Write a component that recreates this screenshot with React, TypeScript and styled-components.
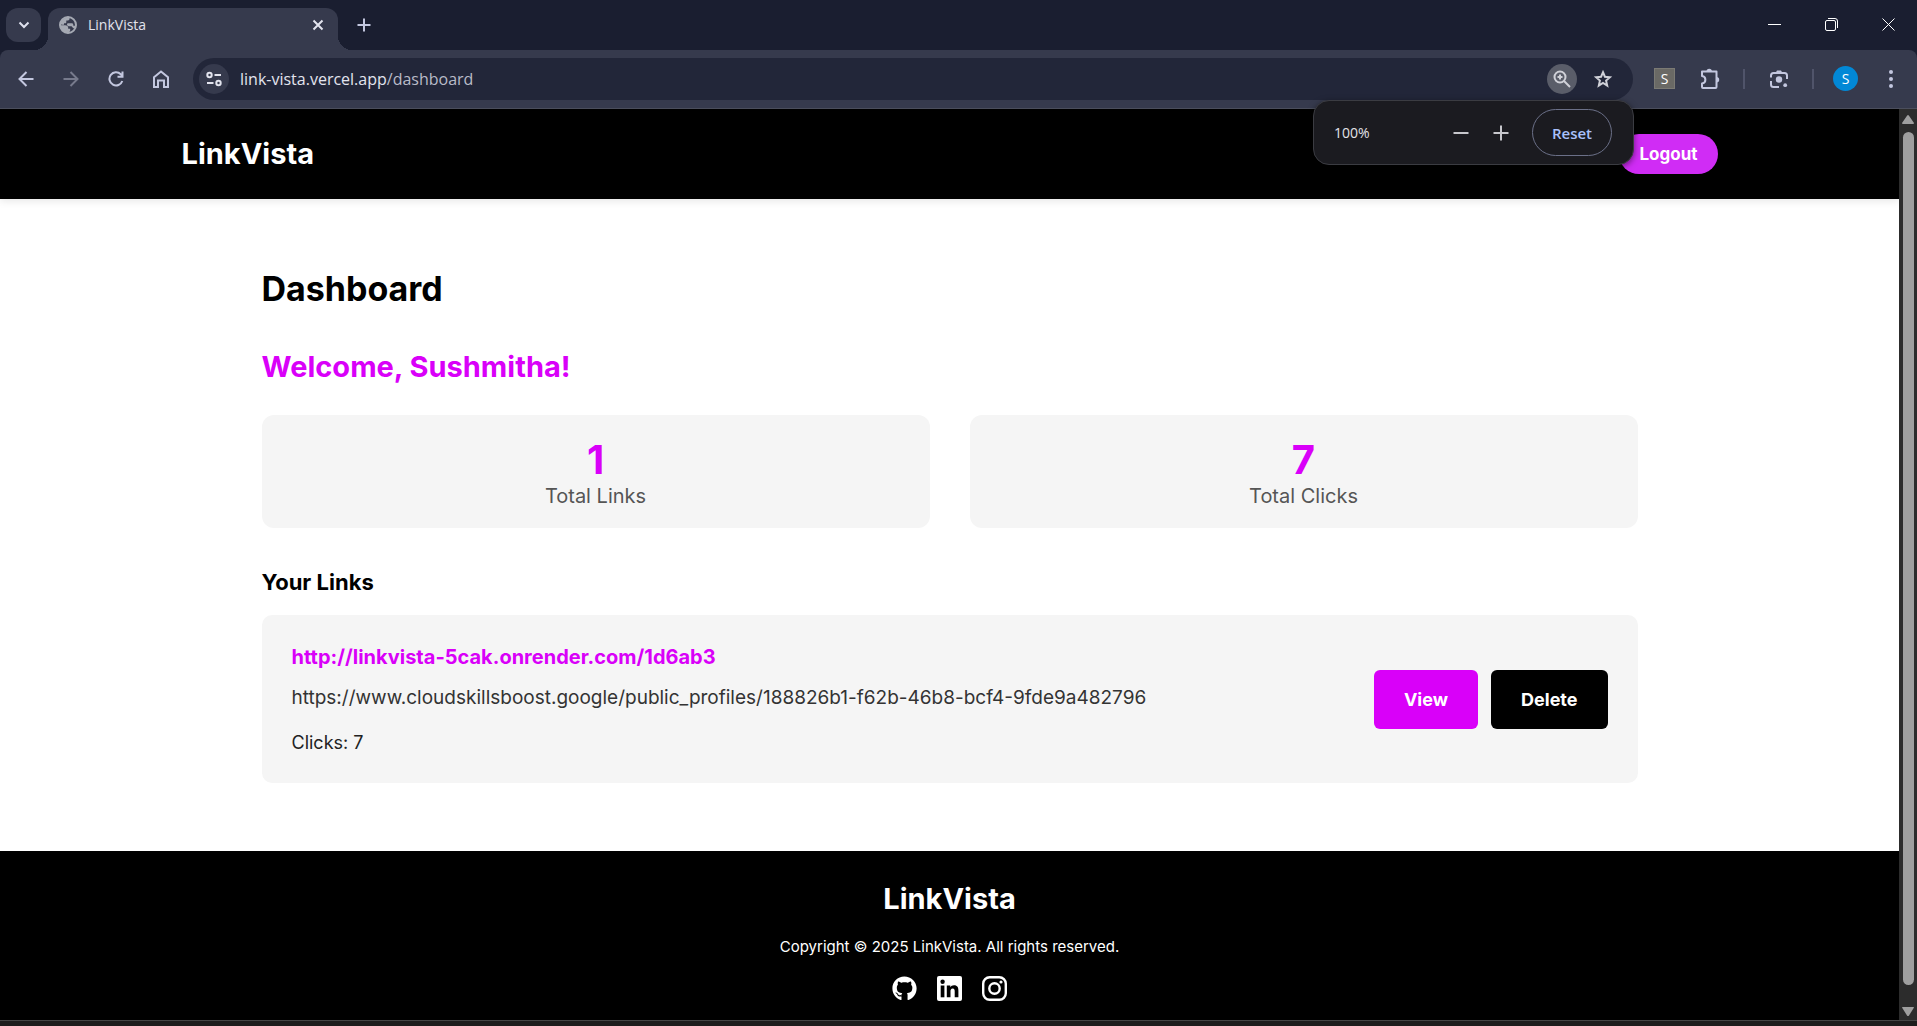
import React from "react";
import styled, { createGlobalStyle } from "styled-components";
import { FaGithub } from "react-icons/fa";

const uiFont = `"Segoe UI", "Open Sans", "Noto Sans", sans-serif`;
const pageFont = `Inter, "Liberation Sans", sans-serif`;
const accent = "#d900f9";

const GlobalStyle = createGlobalStyle`
  *, *::before, *::after { box-sizing: border-box; }
  html, body, #root { height: 100%; }
  body { margin: 0; background: #000; overflow: hidden; }
  h1, h2, h3, p { margin: 0; }
  button, input { font: inherit; }
  svg { display: block; flex: none; }
`;

const Window = styled.div`
  display: flex;
  flex-direction: column;
  height: 100vh;
  background: #1a1e30;
  font-family: ${uiFont};
`;

/* ---------- browser chrome ---------- */

const TabStrip = styled.div`
  display: flex;
  align-items: flex-end;
  height: 50px;
  flex: none;
  padding-left: 6px;
`;

const TabSearch = styled.button`
  display: grid;
  place-items: center;
  width: 35px;
  height: 34px;
  margin: 0 7px 8px 0;
  padding: 0;
  border: 0;
  border-radius: 12px;
  background: #363a4d;
  color: #dfe1ee;
`;

const Tab = styled.div`
  position: relative;
  display: flex;
  align-items: center;
  gap: 11px;
  width: 290px;
  height: 42px;
  padding: 0 10px 8px 11px;
  border-radius: 12px 12px 0 0;
  background: #363a4d;
  color: #e3e4ee;
  font-size: 14px;
  line-height: 20px;

  &::before,
  &::after {
    content: "";
    position: absolute;
    bottom: 0;
    width: 14px;
    height: 14px;
  }
  &::before {
    right: 100%;
    background: radial-gradient(circle at 0 0, transparent 14px, #363a4d 14px);
  }
  &::after {
    left: 100%;
    background: radial-gradient(circle at 100% 0, transparent 14px, #363a4d 14px);
  }
`;

const TabTitle = styled.span`
  flex: 1;
`;

const IconButton = styled.button<{ $size?: number; $bg?: string; $color?: string }>`
  display: grid;
  place-items: center;
  flex: none;
  width: ${(p) => p.$size ?? 30}px;
  height: ${(p) => p.$size ?? 30}px;
  padding: 0;
  border: 0;
  border-radius: 50%;
  background: ${(p) => p.$bg ?? "transparent"};
  color: ${(p) => p.$color ?? "#c3c7df"};
`;

const NewTab = styled.div`
  padding: 0 0 10px 11px;
`;

const WindowControls = styled.div`
  display: flex;
  align-self: stretch;
  margin-left: auto;
`;

const WindowControl = styled.button`
  display: grid;
  place-items: center;
  width: 57px;
  height: 49px;
  padding: 0;
  border: 0;
  background: transparent;
  color: #fff;
`;

const Toolbar = styled.div`
  position: relative;
  display: flex;
  align-items: center;
  height: 59px;
  flex: none;
  padding: 0 11px 1px;
  border-bottom: 1px solid #4b4e5c;
  border-radius: 8px 8px 0 0;
  background: #363a4d;
`;

const NavButtons = styled.div`
  display: flex;
  gap: 15px;
  margin-right: 17px;
`;

const AddressBar = styled.div`
  display: flex;
  align-items: center;
  flex: 1;
  height: 42px;
  padding: 0 15px 0 6px;
  border-radius: 21px;
  background: #222639;
  font-size: 16px;
`;

const Address = styled.div`
  flex: 1;
  padding-left: 11px;
  line-height: 24px;
  color: #e3e4ee;

  span {
    color: #b9bbc8;
  }
`;

const AddressActions = styled.div`
  display: flex;
  gap: 11px;
`;

const ToolbarActions = styled.div`
  display: flex;
  align-items: center;
  padding-left: 21px;
`;

const Extension = styled.button`
  width: 21px;
  height: 21px;
  margin-right: 20px;
  padding: 0;
  border: 1px solid #7b7a74;
  background: #6a6965;
  color: #fff;
  font-size: 14px;
  line-height: 18px;
`;

const Separator = styled.span`
  width: 2px;
  height: 20px;
  margin: 0 19px 0 18px;
  background: #50546a;
`;

const Avatar = styled.button`
  width: 25px;
  height: 25px;
  margin-right: 18px;
  padding: 0;
  border: 0;
  border-radius: 50%;
  background: #0288d6;
  color: #fff;
  font-size: 14px;
  line-height: 24px;
`;

const ZoomBubble = styled.div`
  position: absolute;
  top: 50px;
  right: 283px;
  z-index: 2;
  display: flex;
  align-items: center;
  width: 321px;
  height: 65px;
  padding: 0 21px 0 20px;
  border: 1px solid #3b3c42;
  border-radius: 16px;
  background: #1b1b20;
  box-shadow: 0 2px 6px rgba(0, 0, 0, 0.5);
  color: #e3e3e8;
  font-size: 14px;
  line-height: 20px;
`;

const ZoomLevel = styled.span`
  flex: 1;
`;

const ZoomButtons = styled.div`
  display: flex;
  gap: 10px;
  margin-right: 16px;
`;

const ResetButton = styled.button`
  width: 80px;
  height: 47px;
  padding: 0;
  border: 1px solid #6b7088;
  border-radius: 24px;
  background: transparent;
  color: #a9c0fb;
  font-size: 15px;
  font-weight: 600;
`;

/* ---------- page ---------- */

const Viewport = styled.div`
  display: flex;
  flex: 1;
  min-height: 0;
  font-family: ${pageFont};
`;

const Page = styled.div`
  display: flex;
  flex-direction: column;
  flex: 1;
  background: #fff;
  color: #000;
`;

const Header = styled.header`
  padding: 0 24px;
  background: #000;
  box-shadow: 0 2px 8px rgba(0, 0, 0, 0.1);
`;

const HeaderInner = styled.div`
  display: flex;
  align-items: center;
  justify-content: space-between;
  max-width: 1536px;
  height: 90px;
  margin: 0 auto;
`;

const Brand = styled.a`
  color: #fff;
  font-size: 29px;
  font-weight: 700;
  line-height: 40px;
  text-decoration: none;
`;

const Logout = styled.button`
  height: 40px;
  padding: 0 20px;
  border: 0;
  border-radius: 20px;
  background: #d02cf5;
  color: #fff;
  font-size: 17px;
  font-weight: 700;
`;

const Main = styled.main`
  flex: 1;
  width: 100%;
  max-width: 1536px;
  margin: 0 auto;
  padding: 66px 80px 0;
`;

const Title = styled.h1`
  font-size: 34px;
  font-weight: 700;
  line-height: 48px;
`;

const Welcome = styled.h2`
  margin-top: 34px;
  color: ${accent};
  font-size: 29px;
  font-weight: 700;
  line-height: 40px;
`;

const Stats = styled.dl`
  display: grid;
  grid-template-columns: 1fr 1fr;
  gap: 40px;
  margin: 28px 0 0;
`;

const Stat = styled.div`
  display: flex;
  flex-direction: column-reverse;
  justify-content: center;
  height: 113px;
  border-radius: 12px;
  background: #f5f5f5;
  text-align: center;
`;

const StatLabel = styled.dt`
  color: #555;
  font-size: 20px;
  line-height: 24px;
`;

const StatValue = styled.dd`
  margin: 0;
  color: ${accent};
  font-size: 40px;
  font-weight: 700;
  line-height: 48px;
`;

const SectionTitle = styled.h3`
  margin: 40px 0 19px;
  font-size: 22px;
  font-weight: 700;
  line-height: 28px;
`;

const LinkCard = styled.article`
  display: flex;
  align-items: center;
  justify-content: space-between;
  padding: 28px 30px 27px;
  border-radius: 10px;
  background: #f5f5f5;
`;

const LinkInfo = styled.div`
  display: flex;
  flex-direction: column;
  align-items: flex-start;
`;

const ShortLink = styled.a`
  color: ${accent};
  font-size: 20px;
  font-weight: 700;
  line-height: 28px;
  text-decoration: none;
`;

const LongLink = styled.p`
  margin: 13px 0 18px;
  color: #333;
  font-size: 19px;
  line-height: 28px;
`;

const Clicks = styled.p`
  color: #222;
  font-size: 18px;
  line-height: 26px;
`;

const CardActions = styled.div`
  display: flex;
  gap: 13px;
`;

const CardButton = styled.button<{ $primary?: boolean }>`
  height: 59px;
  padding: 0 30px;
  border: 0;
  border-radius: 6px;
  background: ${(p) => (p.$primary ? accent : "#000")};
  color: #fff;
  font-size: 18px;
  font-weight: 700;
`;

const Footer = styled.footer`
  display: flex;
  flex-direction: column;
  align-items: center;
  height: 169px;
  padding-top: 28px;
  background: #000;
  color: #fff;
`;

const Copyright = styled.p`
  margin: 16px 0 17px;
  font-size: 15px;
  line-height: 24px;
`;

const Socials = styled.nav`
  display: flex;
  gap: 20px;

  a {
    color: #fff;
  }
`;

/* ---------- window edges ---------- */

const ScrollTrack = styled.div`
  display: flex;
  flex-direction: column;
  align-items: center;
  gap: 8px;
  width: 18px;
  flex: none;
  padding: 6px 0 4px;
  background: #2c2c2c;
  color: #9f9f9f;
`;

const ScrollThumb = styled.div`
  flex: 1;
  width: 11px;
  margin-bottom: 14px;
  border-radius: 6px;
  background: #9f9f9f;
`;

const BottomEdge = styled.div`
  height: 6px;
  flex: none;
  border-top: 1px solid #454545;
  background: #1d1c1c;
`;

/* ---------- icons ---------- */

const Svg = ({ size = 24, w = 2, box = 24, children }: { size?: number; w?: number; box?: number; children: React.ReactNode }) => (
  <svg width={size} height={size} viewBox={`0 0 ${box} ${box}`} fill="none" stroke="currentColor" strokeWidth={w} aria-hidden="true">
    {children}
  </svg>
);

const ChevronIcon = () => (
  <Svg size={12} box={12} w={2}><path d="M1.500 3.500 6 8l4.500-4.500" /></Svg>
);
const GlobeIcon = () => (
  <svg width="18" height="18" viewBox="0 0 18 18" aria-hidden="true">
    <circle cx="9" cy="9" r="8" fill="none" stroke="#a5a9b3" strokeWidth="2" />
    <path d="M1.500 9.200h4.700c1.900 0 3 1 3 2.600v1h2v1.700l-1.500 2.700C4.500 17.200 1.500 13.700 1.500 9.200Z" fill="#a5a9b3" />
    <path d="M10.500 1.500v1.300c0 1-.7 1.700-1.600 1.700H7.300v1.800c0 .6-.4 1-1 1H5v1.500H3L1.500 8C2 4 5.500 1 10.500 1.500Z" fill="#a5a9b3" />
    <path d="M9 7.300h3.800c.8 0 1.500.7 1.500 1.500v1h2.500l-.6 2.500c-1 .3-2-.1-2.600-.8l-1-1.300H9.700C8.500 10.200 8 9.400 8 8.600c0-.7.4-1.300 1-1.300Z" fill="#a5a9b3" />
  </svg>
);
const CloseIcon = () => <Svg size={12} box={12} w={2}><path d="m1.500 1.500 9 9m0-9-9 9" /></Svg>;
const PlusIcon = () => <Svg size={14} box={14} w={2}><path d="M7 .5v13M.5 7h13" /></Svg>;
const MinusIcon = () => <Svg size={16} box={16} w={2}><path d="M.5 8h15" /></Svg>;
const BigPlusIcon = () => <Svg size={16} box={16} w={2}><path d="M8 .5v15M.5 8h15" /></Svg>;
const BackIcon = () => <Svg size={16} box={16} w={2}><path d="M15.500 8H2M8.500 1 1.500 8l7 7" /></Svg>;
const ForwardIcon = () => <Svg size={16} box={16} w={2}><path d="M.5 8H14M7.500 1l7 7-7 7" /></Svg>;
const ReloadIcon = () => (
  <Svg size={16} box={16} w={2}><path d="M14.300 10A6.600 6.600 0 1 1 12.800 3.300L14.500 5M14.500 .5v5.200H9.500" /></Svg>
);
const HomeIcon = () => (
  <Svg size={18} box={18} w={2}><path d="M2 7.200 9 1.500l7 5.700V17h-4v-6.500H6V17H2z" /></Svg>
);
const TuneIcon = () => (
  <Svg size={16} box={16} w={2}>
    <circle cx="3.500" cy="4" r="2.200" /><path d="M8.500 4H15M1 12h6.500" /><circle cx="12.500" cy="12" r="2.200" />
  </Svg>
);
const ZoomIcon = () => (
  <Svg size={18} box={18} w={2}>
    <circle cx="7" cy="7" r="5.500" /><path d="m11 11 6 6" /><path d="M7 4.500v5M4.500 7h5" />
  </Svg>
);
const StarIcon = () => (
  <Svg size={20} box={20} w={2}>
    <path d="m10 3.200 1.900 4.500 5 .5-3.800 3.400 1.100 5-4.200-2.600-4.200 2.600 1.100-5-3.800-3.400 5-.5z" />
  </Svg>
);
const PuzzleIcon = () => (
  <Svg size={22} box={22} w={2}>
    <path d="M3 3.500h14.500V19a1 1 0 0 1-1 1H4a1 1 0 0 1-1-1v-3.500c4.500-.5 4.500-7 0-7.500z" strokeLinejoin="round" />
    <path d="M7.500 3.500a2.700 2.700 0 0 1 5.400 0zM17.500 9a2.700 2.700 0 0 1 0 5.400z" fill="currentColor" stroke="none" />
  </Svg>
);
const LensIcon = () => (
  <Svg size={20} box={20} w={2}>
    <path d="M2 8.500V6.500A2.500 2.500 0 0 1 4.500 4h11A2.500 2.500 0 0 1 18 6.500v3.500M2 12v3.500A2.500 2.500 0 0 0 4.500 18H10" />
    <path d="M6.500 4 8 1.500h4L13.500 4z" fill="currentColor" stroke="none" />
    <circle cx="10" cy="10.500" r="3.200" fill="currentColor" stroke="none" />
    <circle cx="16.200" cy="16.200" r="1.900" fill="currentColor" stroke="none" />
  </Svg>
);
const MenuIcon = () => (
  <svg width="18" height="18" viewBox="0 0 18 18" fill="currentColor" aria-hidden="true">
    <circle cx="9" cy="2" r="2" /><circle cx="9" cy="9" r="2" /><circle cx="9" cy="16" r="2" />
  </svg>
);
const MinimizeIcon = () => <Svg size={13} box={13} w={1}><path d="M0 6.500h13" /></Svg>;
const RestoreIcon = () => (
  <Svg size={13} box={13} w={1}><rect x=".5" y="2.500" width="10" height="10" rx="1.500" /><path d="M3 .5h7A2.500 2.500 0 0 1 12.500 3v7" /></Svg>
);
const WinCloseIcon = () => <Svg size={13} box={13} w={1}><path d="m.5.5 12 12m0-12-12 12" /></Svg>;
const InstagramIcon = () => (
  <Svg size={25} box={25} w={2}>
    <rect x="1.200" y="1.200" width="22.600" height="22.600" rx="6.500" strokeWidth="2.400" />
    <circle cx="12.500" cy="12.500" r="5.200" strokeWidth="2.400" />
    <circle cx="19" cy="6" r="1.600" fill="currentColor" stroke="none" />
  </Svg>
);
const LinkedinIcon = () => (
  <svg width="25" height="25" viewBox="0 0 25 25" aria-hidden="true">
    <rect width="25" height="25" rx="2" fill="currentColor" />
    <g fill="#000">
      <circle cx="5.600" cy="5.700" r="2.200" />
      <rect x="3.700" y="9.500" width="3.700" height="11.800" />
      <path d="M9.800 9.500h3.500v1.700c.6-1.100 1.900-2 3.700-2 3.600 0 4.400 2.300 4.400 5.500v6.600h-3.700v-5.900c0-1.600-.2-3-2-3s-2.200 1.400-2.200 2.900v6H9.800z" />
    </g>
  </svg>
);
const ArrowUp = () => (
  <svg width="12" height="9" viewBox="0 0 12 9" fill="currentColor" aria-hidden="true"><path d="M5 .8a1.200 1.200 0 0 1 2 0L12 8 11.500 9H.5L0 8z" /></svg>
);
const ArrowDown = () => (
  <svg width="12" height="9" viewBox="0 0 12 9" fill="currentColor" aria-hidden="true"><path d="M5 8.500a1.200 1.200 0 0 0 2 0L12 .5 11.500 0H.5L0 .5z" /></svg>
);

export default function App() {
  return (
    <Window>
      <GlobalStyle />
      <TabStrip>
        <TabSearch aria-label="Search tabs"><ChevronIcon /></TabSearch>
        <Tab>
          <GlobeIcon />
          <TabTitle>LinkVista</TabTitle>
          <IconButton $size={20} $color="#e3e4ee" aria-label="Close tab"><CloseIcon /></IconButton>
        </Tab>
        <NewTab><IconButton aria-label="New tab"><PlusIcon /></IconButton></NewTab>
        <WindowControls>
          <WindowControl aria-label="Minimize"><MinimizeIcon /></WindowControl>
          <WindowControl aria-label="Restore"><RestoreIcon /></WindowControl>
          <WindowControl aria-label="Close window"><WinCloseIcon /></WindowControl>
        </WindowControls>
      </TabStrip>

      <Toolbar>
        <NavButtons>
          <IconButton aria-label="Back"><BackIcon /></IconButton>
          <IconButton $color="#777a8c" aria-label="Forward"><ForwardIcon /></IconButton>
          <IconButton aria-label="Reload"><ReloadIcon /></IconButton>
          <IconButton aria-label="Home"><HomeIcon /></IconButton>
        </NavButtons>
        <AddressBar>
          <IconButton $bg="#363a4d" $color="#e3e4ee" aria-label="Site information"><TuneIcon /></IconButton>
          <Address>link-vista.vercel.app<span>/dashboard</span></Address>
          <AddressActions>
            <IconButton $bg="#5a5d69" $color="#d0d1d8" aria-label="Zoom"><ZoomIcon /></IconButton>
            <IconButton $color="#d0d1d8" aria-label="Bookmark this page"><StarIcon /></IconButton>
          </AddressActions>
        </AddressBar>
        <ToolbarActions>
          <Extension aria-label="S extension">S</Extension>
          <IconButton aria-label="Extensions"><PuzzleIcon /></IconButton>
          <Separator />
          <IconButton aria-label="Search with Lens"><LensIcon /></IconButton>
          <Separator />
          <Avatar aria-label="Profile S">S</Avatar>
          <IconButton aria-label="Menu"><MenuIcon /></IconButton>
        </ToolbarActions>
        <ZoomBubble>
          <ZoomLevel>100%</ZoomLevel>
          <ZoomButtons>
            <IconButton $color="#c7c7cc" aria-label="Zoom out"><MinusIcon /></IconButton>
            <IconButton $color="#c7c7cc" aria-label="Zoom in"><BigPlusIcon /></IconButton>
          </ZoomButtons>
          <ResetButton>Reset</ResetButton>
        </ZoomBubble>
      </Toolbar>

      <Viewport>
        <Page>
          <Header>
            <HeaderInner>
              <Brand href="#home">LinkVista</Brand>
              <Logout>Logout</Logout>
            </HeaderInner>
          </Header>
          <Main>
            <Title>Dashboard</Title>
            <Welcome>Welcome, Sushmitha!</Welcome>
            <Stats>
              <Stat><StatLabel>Total Links</StatLabel><StatValue>1</StatValue></Stat>
              <Stat><StatLabel>Total Clicks</StatLabel><StatValue>7</StatValue></Stat>
            </Stats>
            <SectionTitle>Your Links</SectionTitle>
            <LinkCard>
              <LinkInfo>
                <ShortLink href="#1d6ab3">http://linkvista-5cak.onrender.com/1d6ab3</ShortLink>
                <LongLink>https://www.cloudskillsboost.google/public_profiles/188826b1-f62b-46b8-bcf4-9fde9a482796</LongLink>
                <Clicks>Clicks: 7</Clicks>
              </LinkInfo>
              <CardActions>
                <CardButton $primary>View</CardButton>
                <CardButton>Delete</CardButton>
              </CardActions>
            </LinkCard>
          </Main>
          <Footer>
            <Brand href="#home">LinkVista</Brand>
            <Copyright>Copyright © 2025 LinkVista. All rights reserved.</Copyright>
            <Socials aria-label="Social media">
              <a href="#github" aria-label="GitHub"><FaGithub size={25} /></a>
              <a href="#linkedin" aria-label="LinkedIn"><LinkedinIcon /></a>
              <a href="#instagram" aria-label="Instagram"><InstagramIcon /></a>
            </Socials>
          </Footer>
        </Page>
        <ScrollTrack>
          <ArrowUp />
          <ScrollThumb />
          <ArrowDown />
        </ScrollTrack>
      </Viewport>
      <BottomEdge />
    </Window>
  );
}
